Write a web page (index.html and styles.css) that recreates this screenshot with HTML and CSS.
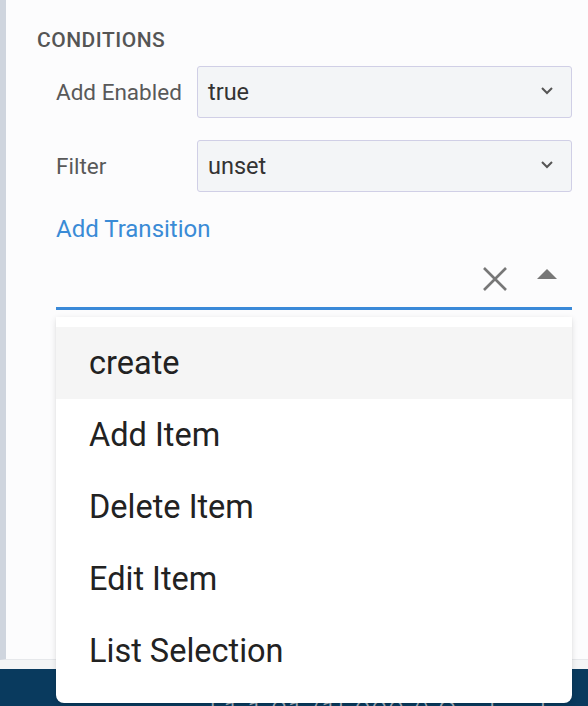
FILE: index.html
```html
<!DOCTYPE html>
<html>
<head>
<meta charset="utf-8">
<link rel="stylesheet" href="styles.css">
</head>
<body>
<div class="page">
  <div class="panel">
    <h3 class="section-title">CONDITIONS</h3>
    <div class="rows">
      <div class="row">
        <span class="label">Add Enabled</span>
        <div class="select"><span>true</span>
          <svg class="chev" width="14" height="9" viewBox="0 0 14 9"><path d="M2 2 L7 7 L12 2" fill="none" stroke="#555" stroke-width="2"/></svg>
        </div>
      </div>
      <div class="row">
        <span class="label">Filter</span>
        <div class="select"><span>unset</span>
          <svg class="chev" width="14" height="9" viewBox="0 0 14 9"><path d="M2 2 L7 7 L12 2" fill="none" stroke="#555" stroke-width="2"/></svg>
        </div>
      </div>
      <a class="link" href="#">Add Transition</a>
      <div class="ac">
        <div class="ac-input">
          <svg class="clear" width="26" height="26" viewBox="0 0 26 26"><path d="M2 2 L24 24 M24 2 L2 24" stroke="#777" stroke-width="2.6" fill="none"/></svg>
          <svg class="caret" width="22" height="12" viewBox="0 0 22 12"><path d="M1 11 L11 1 L21 11 Z" fill="#777"/></svg>
        </div>
        <ul class="menu">
          <li class="item active">create</li>
          <li class="item">Add Item</li>
          <li class="item">Delete Item</li>
          <li class="item">Edit Item</li>
          <li class="item">List Selection</li>
        </ul>
      </div>
    </div>
  </div>
  <div class="gap"></div>
  <footer class="footer">gd 1.1.21 (1b0007) September</footer>
</div>
</body>
</html>
```
FILE: styles.css
```css
html, body {
  margin: 0;
  padding: 0;
}
body {
  width: 588px;
  height: 706px;
  overflow: hidden;
  background: #f6f7f8;
  font-family: Roboto, "Liberation Sans", sans-serif;
}
.page {
  display: flex;
  flex-direction: column;
  height: 706px;
}
.panel {
  height: 660px;
  box-sizing: border-box;
  border-left: 6px solid #cfd5de;
  border-bottom: 1px solid #e6e8eb;
  background: #fcfcfd;
  padding: 28px 16px 0 31px;
}
.section-title {
  margin: 0;
  font-size: 21px;
  font-weight: 500;
  letter-spacing: 0.5px;
  color: #555;
  line-height: 24px;
}
.rows {
  padding-left: 19px;
  margin-top: 14px;
}
.row {
  display: flex;
  align-items: center;
  margin-bottom: 22px;
}
.label {
  width: 141px;
  font-size: 22.5px;
  color: #595959;
}
.select {
  flex: 1;
  height: 52px;
  box-sizing: border-box;
  border: 1.5px solid #d0cfe6;
  border-radius: 3px;
  background: #f3f5f7;
  display: flex;
  align-items: center;
  justify-content: space-between;
  padding: 0 17px 0 10px;
  font-size: 23.5px;
  color: #333;
}
.chev {
  margin-top: -4px;
}
.link {
  display: block;
  margin-top: 1px;
  font-size: 24px;
  color: #3a8bd6;
  text-decoration: none;
  line-height: 30px;
}
.ac {
  position: relative;
}
.ac-input {
  height: 66px;
  border-bottom: 3px solid #3a89d8;
  display: flex;
  align-items: center;
  justify-content: flex-end;
  padding-right: 14px;
  box-sizing: border-box;
}
.clear {
  margin-right: 28px;
  margin-top: 6px;
}
.caret {
  margin-top: -4px;
}
.menu {
  position: absolute;
  left: 0;
  right: 0;
  top: 73px;
  margin: 0;
  padding: 10px 0 16px;
  list-style: none;
  background: #fff;
  border-radius: 0 0 8px 8px;
  box-shadow: 0 2px 6px rgba(0,0,0,0.12), 0 1px 2px rgba(0,0,0,0.06);
  z-index: 2;
}
.item {
  height: 72px;
  display: flex;
  align-items: center;
  padding-left: 33px;
  font-size: 32.5px;
  color: #222;
}
.item.active {
  background: #f5f5f5;
}
.gap {
  height: 9px;
  background: #f4f5f6;
}
.footer {
  flex: 1;
  background: #093a5e;
  color: #a9b4bf;
  font-size: 30px;
  font-weight: 300;
  padding: 26px 6px 0 0;
  text-align: right;
  white-space: nowrap;
  overflow: hidden;
  line-height: 34px;
}
```
